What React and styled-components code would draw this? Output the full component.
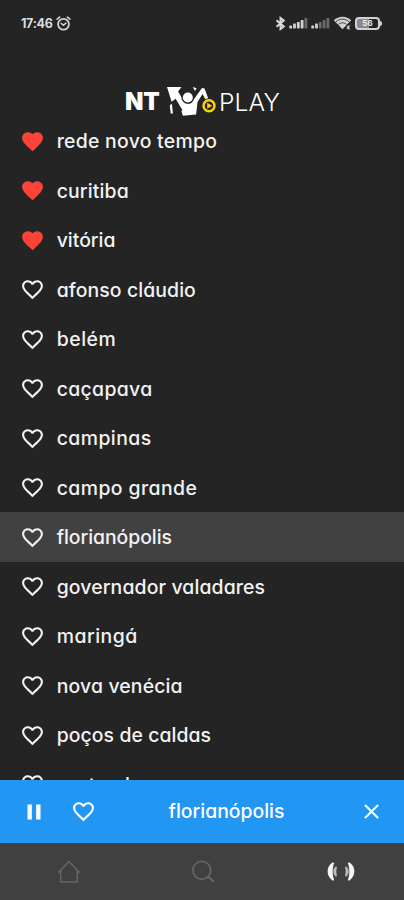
import React, { useState } from 'react'
import styled, { createGlobalStyle } from 'styled-components'
import { MdFavorite, MdFavoriteBorder, MdPause, MdClose } from 'react-icons/md'

const STATIONS = [
  { name: 'rede novo tempo', favorite: true, tracking: 0.27 },
  { name: 'curitiba', favorite: true, tracking: 0.15 },
  { name: 'vitória', favorite: true, tracking: 0 },
  { name: 'afonso cláudio', tracking: 0.1 },
  { name: 'belém', tracking: 0.55 },
  { name: 'caçapava', tracking: 0.35 },
  { name: 'campinas', tracking: 0.45 },
  { name: 'campo grande', tracking: 0.43 },
  { name: 'florianópolis', tracking: -0.05 },
  { name: 'governador valadares', tracking: 0.13 },
  { name: 'maringá', tracking: 0.5 },
  { name: 'nova venécia', tracking: 0.15 },
  { name: 'poços de caldas', tracking: 0.08 },
  { name: 'porto alegre', tracking: 0.2 },
]

const BARS = [3, 5, 6.5, 8.5, 10.5]

const Signal = ({ strength }) => (
  <svg width="19" height="12" viewBox="0 0 19 12">
    {BARS.map((h, i) => (
      <rect key={h} x={0.3 + i * 3.8} y={11.4 - h} width="2.8" height={h} rx="0.6"
        fill={i < strength ? '#d2d2d2' : '#6b6b6b'} />
    ))}
  </svg>
)

const AlarmIcon = () => (
  <svg width="15" height="15" viewBox="0 0 15 15" fill="none" stroke="#d4d4d4" strokeLinecap="round">
    <circle cx="7.5" cy="8.3" r="5.4" strokeWidth="1.8" />
    <path d="M5.2 7.4l2.2 1.9 2.5-2.2" strokeWidth="1.4" />
    <path d="M1.2 3.2l2.4-2M13.8 3.2l-2.4-2" strokeWidth="1.7" />
  </svg>
)

const BluetoothIcon = () => (
  <svg width="11" height="15" viewBox="0 0 10 15" fill="none" stroke="#dadada" strokeWidth="1.9">
    <path d="M1 4.2l7.3 6.3L5 13.1V1.9l3.3 2.6L1 10.8" />
  </svg>
)

const WifiIcon = () => (
  <svg width="19" height="16" viewBox="0 0 18 15">
    <path d="M0.8 5C5.3.3 12.7.3 17.2 5L9 13.5z" fill="#d2d2d2" />
    <path d="M2.9 6.3c3.5-3.3 8.7-3.3 12.2 0M5.2 8.8c2.2-2 5.4-2 7.6 0" fill="none" stroke="#242424" strokeWidth="0.8" />
    <path d="M13 10.5l3.5-1.5-1 3 1.2 2-3.7-.5z" fill="#d2d2d2" stroke="#242424" strokeWidth="0.5" />
  </svg>
)

const LogoMark = () => (
  <svg width="52" height="32" viewBox="0 0 52 32">
    <g fill="#fff">
      <path d="M2 2h14.5l-3.5 4.500 4 6.500 5 5.500 4-.3 4-5.500 7-9.700 2.500.5 3.800 10-2.800 1-3-5.500-5 8-1.400 12.500-13.200 1.300-1.500-4.500 1-1.200-6.800-11.300-4 3z" />
      <path d="M4.8 20l2.200-1 .9 9.500h-2.200z" />
      <path d="M27.8 2l3.8 1.300-1.600 2.600z" />
    </g>
    <circle cx="22.8" cy="12.5" r="5.7" fill="#fff" stroke="#242424" strokeWidth="1.3" />
    <circle cx="44" cy="20.7" r="7.5" fill="#242424" />
    <circle cx="44" cy="20.7" r="5.5" fill="#242424" stroke="#fcd30b" strokeWidth="2.5" />
    <path d="M42.2 17.7l5 3-5 3z" fill="#fcd30b" />
  </svg>
)

const HomeIcon = () => (
  <svg width="24" height="24" viewBox="0 0 24 24" fill="none" stroke="currentColor" strokeWidth="1.5">
    <path d="M1.3 12.8L12 1.5l10.7 11.3M3.7 11v11h16.6V11" />
  </svg>
)

const SearchIcon = () => (
  <svg width="24" height="24" viewBox="0 0 24 24" fill="none" stroke="currentColor" strokeWidth="1.7">
    <circle cx="10.8" cy="10.3" r="8.9" />
    <path d="M17 16.5l5.8 5.3" strokeWidth="2.2" />
  </svg>
)

const RadioIcon = () => (
  <svg width="30" height="22" viewBox="0 0 30 22">
    <g id="wave">
      <path d="M6.5 1.5C0 5.5 0 15 6.5 19.5c1.7.3 2-.8 1.200-1.800-1.400-4.500-1.400-9.900 0-14.400.8-1 .5-2.100-1.200-1.800z" fill="#f4f4f4" />
      <path d="M9.7 5.8c-2.700 2-2.700 7.400 0 9.400.8.2 1-.3.8-1-.6-2.400-.6-5 0-7.400.2-.7 0-1.200-.8-1z" fill="#bdbdbd" stroke="#bdbdbd" strokeWidth="0.6" />
    </g>
    <use href="#wave" transform="translate(30 0) scale(-1 1)" />
  </svg>
)

const App = () => {
  const [current, setCurrent] = useState('florianópolis')

  return (
    <Screen>
      <GlobalStyle />
      <StatusBar>
        <Clock>17:46</Clock>
        <AlarmIcon />
        <StatusIcons>
          <BluetoothIcon />
          <Signal strength={4} />
          <Signal strength={2} />
          <WifiIcon />
          <Battery><Charge>56</Charge></Battery>
        </StatusIcons>
      </StatusBar>
      <Header>
        <LogoBold>NT</LogoBold>
        <LogoMark />
        <LogoLight>PLAY</LogoLight>
      </Header>
      <List>
        {STATIONS.map(s => (
          <Row key={s.name} $active={s.name === current} onClick={() => setCurrent(s.name)}>
            {s.favorite ? <MdFavorite size={25} color="#fb4437" /> : <MdFavoriteBorder size={25} />}
            <Name $tracking={s.tracking}>{s.name}</Name>
          </Row>
        ))}
      </List>
      <Player>
        <IconButton $width={67}><MdPause size={26} /></IconButton>
        <IconButton $width={32}><MdFavoriteBorder size={25} /></IconButton>
        <Title $tracking={0}>{current}</Title>
        <IconButton $width={65}><MdClose size={25} /></IconButton>
      </Player>
      <Nav>
        <Tab><HomeIcon /></Tab>
        <Tab><SearchIcon /></Tab>
        <Tab $shift={8}><RadioIcon /></Tab>
      </Nav>
    </Screen>
  )
}

export default App

/* Styles */
const GlobalStyle = createGlobalStyle`
  body {
    margin: 0;
    background: #242424;
  }
  svg {
    display: block;
    flex: none;
  }
`;

const Screen = styled.div`
  display: flex;
  flex-direction: column;
  width: 404px;
  height: 900px;
  overflow: hidden;
  background: #242424;
  color: #f2f2f2;
  font-family: Inter, "Noto Sans", sans-serif;
`;

const StatusBar = styled.div`
  display: flex;
  align-items: center;
  flex: none;
  height: 46px;
  padding: 0 22px 0 21px;
`;

const Clock = styled.span`
  width: 35px;
  color: #dcdcdc;
  font-size: 12.5px;
  font-weight: 700;
  letter-spacing: -0.3px;
`;

const StatusIcons = styled.div`
  display: flex;
  align-items: center;
  gap: 3px;
  margin-left: auto;
`;

const Battery = styled.div`
  display: flex;
  align-items: center;

  &::after {
    content: "";
    width: 2px;
    height: 5px;
    border-radius: 0 2px 2px 0;
    background: #d2d2d2;
  }
`;

const Charge = styled.span`
  box-sizing: border-box;
  width: 25px;
  height: 13px;
  border: 2px solid #d2d2d2;
  border-radius: 4px;
  background: linear-gradient(90deg, #8b8b8b 58%, #242424 58%);
  color: #efefef;
  font-size: 8px;
  font-weight: 700;
  line-height: 9px;
  text-align: center;
`;

const Header = styled.header`
  display: flex;
  align-items: center;
  flex: none;
  box-sizing: border-box;
  height: 70.4px;
  padding: 40px 0 0 125px;
  color: #fff;
`;

const LogoBold = styled.span`
  width: 40px;
  padding-top: 2px;
  font-size: 24px;
  font-weight: 900;
  line-height: 28px;
  letter-spacing: -0.3px;
`;

const LogoLight = styled.span`
  padding: 2px 0 0 2px;
  font-size: 24.5px;
  font-weight: 300;
  line-height: 28px;
  letter-spacing: 0.2px;
`;

const List = styled.ul`
  flex: 1;
  min-height: 0;
  margin: 0;
  padding: 0;
  overflow: hidden;
  list-style: none;
`;

const Row = styled.li`
  display: flex;
  align-items: center;
  gap: 12.2px;
  height: 49.5px;
  padding-left: 19.5px;
  background: ${props => props.$active ? '#414141' : 'transparent'};
`;

const Name = styled.span`
  font-size: 19.4px;
  font-weight: 500;
  font-feature-settings: "cv11";
  letter-spacing: ${props => props.$tracking}px;
  white-space: nowrap;
`;

const Player = styled.div`
  display: flex;
  align-items: center;
  flex: none;
  height: 63px;
  background: #2196f3;
  color: #fff;
`;

const IconButton = styled.button`
  display: flex;
  justify-content: center;
  width: ${props => props.$width}px;
  padding: 0;
  border: none;
  background: none;
  color: inherit;
`;

const Title = styled(Name)`
  flex: 1;
  padding: 0 0 1px 15px;
  text-align: center;
`;

const Nav = styled.nav`
  display: grid;
  grid-template-columns: repeat(3, 1fr);
  flex: none;
  box-sizing: border-box;
  height: 57px;
  padding-left: 2px;
  background: #404040;
  color: #666;
`;

const Tab = styled.div`
  display: flex;
  align-items: center;
  justify-content: center;
  padding-left: ${props => props.$shift || 0}px;
`;
